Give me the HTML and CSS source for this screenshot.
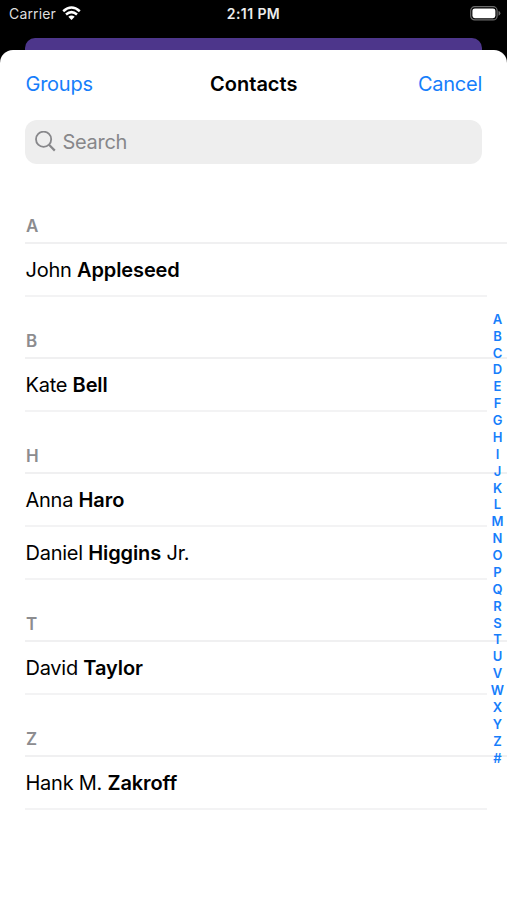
FILE: index.html
```html
<!DOCTYPE html>
<html lang="en">
<head>
<meta charset="utf-8">
<title>Contacts</title>
<link rel="stylesheet" href="styles.css">
</head>
<body>
<div class="phone">
  <header class="status">
    <div class="carrier"><span class="carrier-name">Carrier</span>
      <svg class="wifi" width="19" height="15" viewBox="0 0 19 15" fill="none" stroke="#fff" stroke-width="2.5"><path d="M1.2 5.2Q9.5-2.2 17.8 5.2M4 8.5Q9.5 3.7 15 8.5"/><path d="M9.5 14 6.3 10.8Q9.5 8 12.7 10.8Z" fill="#fff" stroke="none"/></svg>
    </div>
    <div class="time">2:11 PM</div>
    <svg class="battery" width="31" height="15" viewBox="0 0 31 15"><rect x=".7" y=".7" width="26.4" height="13.2" rx="4" fill="none" stroke="#6b6b6b" stroke-width="1.2"/><rect x="2.4" y="2.4" width="23" height="9.8" rx="2.4" fill="#fff"/><path d="M28.5 5Q30.4 5.5 30.4 7.3T28.5 9.7Z" fill="#6b6b6b"/></svg>
  </header>
  <div class="backdrop"></div>
  <main class="sheet">
    <nav class="nav"><a class="groups">Groups</a><h1 class="title">Contacts</h1><a class="cancel">Cancel</a></nav>
    <div class="search">
      <svg width="21" height="21" viewBox="0 0 21 21" fill="none" stroke="#87878a" stroke-width="1.8"><circle cx="8.6" cy="8.3" r="7.6"/><path d="M14 13.8 19.8 19.6" stroke-width="2.2"/></svg>
      <span class="search-text">Search</span>
    </div>
    <div class="content">
      <div class="list">
        <h2 class="letter">A</h2>
        <div class="row"><span>John <b>Appleseed</b></span></div>
        <h2 class="letter">B</h2>
        <div class="row"><span>Kate <b>Bell</b></span></div>
        <h2 class="letter">H</h2>
        <div class="row"><span>Anna <b>Haro</b></span></div>
        <div class="row"><span>Daniel <b>Higgins</b> Jr.</span></div>
        <h2 class="letter">T</h2>
        <div class="row"><span>David <b>Taylor</b></span></div>
        <h2 class="letter">Z</h2>
        <div class="row"><span>Hank M. <b>Zakroff</b></span></div>
      </div>
      <div class="index">
        <span>A</span><span>B</span><span>C</span><span>D</span><span>E</span><span>F</span><span>G</span><span>H</span><span>I</span><span>J</span><span>K</span><span>L</span><span>M</span><span>N</span><span>O</span><span>P</span><span>Q</span><span>R</span><span>S</span><span>T</span><span>U</span><span>V</span><span>W</span><span>X</span><span>Y</span><span>Z</span><span>#</span>
      </div>
    </div>
  </main>
</div>
</body>
</html>
```
FILE: styles.css
```css
* { box-sizing: border-box; }
body { margin: 0; background: #000; font-family: Inter, "Liberation Sans", sans-serif; }
.phone { width: 507px; height: 900px; overflow: hidden; display: flex; flex-direction: column; background: #000; }
.status { height: 38px; flex: none; display: grid; grid-template-columns: 1fr auto 1fr; align-items: start; padding: 5px 6px 0 9px; color: #ececec; font-size: 14px; line-height: 18px; }
.carrier { display: flex; gap: 6px; }
.carrier-name { color: #dedede; font-size: 14px; letter-spacing: 0.15px; }
.wifi { margin-top: 1px; }
.time { font-weight: 600; letter-spacing: 0.4px; margin-left: -3px; }
.battery { justify-self: end; margin-top: 1px; }
.backdrop { height: 24px; flex: none; margin: 0 25px; background: #4d368b; border-radius: 10px 10px 0 0; }
.sheet { flex: 1; margin-top: -12px; background: #fff; border-radius: 13px 13px 0 0; display: flex; flex-direction: column; z-index: 1; }
.nav { height: 69.6px; flex: none; padding: 0 25px 1px 25.5px; display: grid; grid-template-columns: 1fr auto 1fr; align-items: center; font-size: 20px; color: #167efb; letter-spacing: -0.25px; }
.title { margin: 0; color: #000; font-size: 20px; font-weight: 600; letter-spacing: 0; }
.cancel { justify-self: end; }
.search { height: 44px; flex: none; margin: 0 25px; padding-left: 10px; border-radius: 12px; background: #eee; display: flex; align-items: center; gap: 6.5px; color: #87878a; font-size: 20px; letter-spacing: -0.3px; }
.content { display: flex; padding-top: 18.6px; position: relative; }
.list { flex: 1; padding-left: 25px; }
.letter { height: 61.6px; margin: 0; padding: 0 0 5px 1px; border-bottom: 2px solid #f0f0f1; display: flex; align-items: flex-end; color: #8c8c8f; font-size: 17px; line-height: 21px; font-weight: 600; }
.row { height: 53.3px; margin-right: 20px; padding: 1px 0 0 0.5px; border-bottom: 2px solid #f3f3f4; display: flex; align-items: center; color: #000; font-size: 20px; letter-spacing: -0.25px; }
.row b { font-weight: 600; letter-spacing: -0.1px; }
.index { position: absolute; right: 0; top: 147.2px; width: 19px; display: flex; flex-direction: column; align-items: center; color: #167efb; font-size: 13px; line-height: 16.88px; font-weight: 600; }
.index span { height: 16.88px; }
```
